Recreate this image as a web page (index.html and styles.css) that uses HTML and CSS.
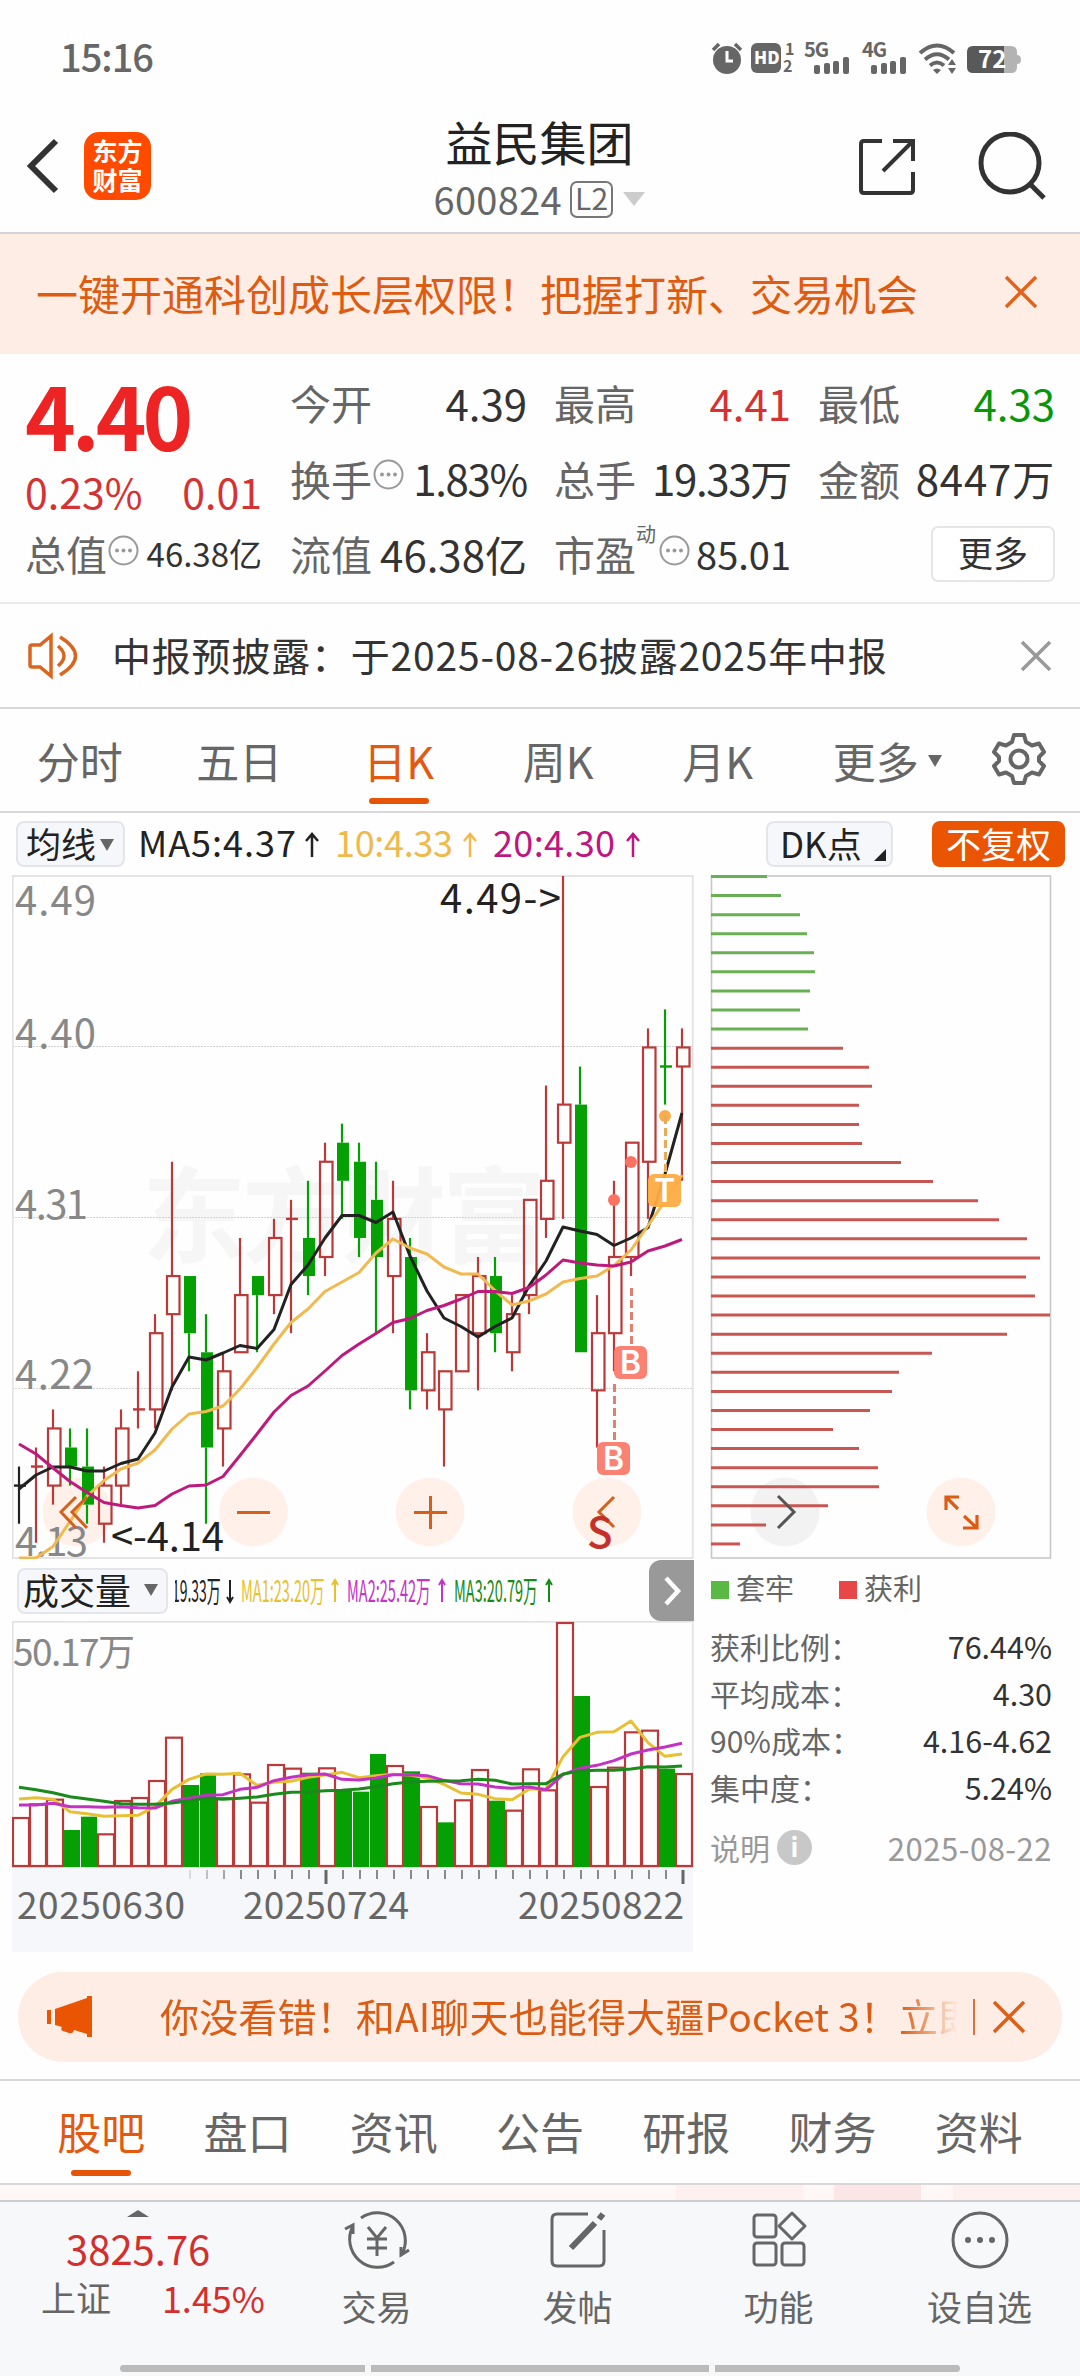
FILE: index.html
```html
<!DOCTYPE html>
<html lang="zh-CN">
<head>
    <meta charset="UTF-8">
    <meta name="viewport" content="width=device-width, initial-scale=1.0">
    <title>益民集团 600824</title>
    <link rel="stylesheet" href="styles.css">
</head>
<body>
    <div class="status-bar">
        <span class="time">15:16</span>
        <svg class="status-icons" width="312" height="38" viewBox="0 -4 312 38">
            <g fill="#666">
                <circle cx="16" cy="19" r="14"/>
                <path d="M2 9L8 3M30 9L24 3" stroke="#666" stroke-width="3.5"/>
                <rect x="40" y="2" width="30" height="30" rx="6"/>
                <text x="74" y="14" class="st-tiny">1</text>
                <text x="72" y="31" class="st-tiny">2</text>
                <text x="93" y="16" class="st-net">5G</text>
                <text x="151" y="16" class="st-net">4G</text>
                <rect x="103" y="24" width="6" height="9" rx="2"/>
                <rect x="113" y="22" width="6" height="11" rx="2"/>
                <rect x="122" y="20" width="6" height="13" rx="2"/>
                <rect x="132" y="16" width="6" height="17" rx="2"/>
                <rect x="160" y="24" width="6" height="9" rx="2"/>
                <rect x="170" y="22" width="6" height="11" rx="2"/>
                <rect x="179" y="20" width="6" height="13" rx="2"/>
                <rect x="189" y="16" width="6" height="17" rx="2"/>
                <path d="M222 29Q226 26 230 29L226 33Z"/>
                <path d="M237 24L241 18L245 24ZM237 27L241 33L245 27Z"/>
            </g>
            <path d="M16 10V20H22" fill="none" stroke="#fff" stroke-width="3"/>
            <text x="43" y="23" class="st-hd">HD</text>
            <g fill="none" stroke="#666" stroke-width="4">
                <path d="M209 12Q226 -3 243 12"/>
                <path d="M214 18.500Q226 8 238 18.500"/>
                <path d="M219 24.500Q226 18.500 233 24.500"/>
            </g>
            <path d="M262 5H294V32H262Q256 32 256 26V11Q256 5 262 5Z" fill="#595959"/>
            <path d="M293 5H300Q306 5 306 11V14Q310 14 310 19Q310 23 306 23V26Q306 32 300 32H293Z" fill="#b3b3b3"/>
            <text x="267" y="27" class="st-bat">72</text>
        </svg>
    </div>

    <header class="top">
        <svg class="back" width="34" height="58" viewBox="0 0 34 58"><path d="M30 4L5 29L30 54" fill="none" stroke="#333" stroke-width="6"/></svg>
        <div class="logo">东方<br>财富</div>
        <div class="stock">
            <h1>益民集团</h1>
            <div class="code">600824<span class="level">L2</span><i class="tri"></i></div>
        </div>
        <svg class="share" width="60" height="60" viewBox="0 0 60 60"><g fill="none" stroke="#333" stroke-width="4"><path d="M25 4H7Q4 4 4 7V53Q4 56 7 56H53Q56 56 56 53V35"/><path d="M36 4H56V24M56 4L26 34"/></g></svg>
        <svg class="search" width="72" height="72" viewBox="0 0 72 72"><g fill="none" stroke="#333" stroke-width="5"><circle cx="32" cy="31" r="29"/><path d="M52 52L66 66"/></g></svg>
    </header>

    <div class="promo">
        <span>一键开通科创成长层权限！把握打新、交易机会</span>
        <svg width="36" height="36" viewBox="0 0 36 36"><path d="M3 3L33 33M33 3L3 33" stroke="#e2631c" stroke-width="3.5"/></svg>
    </div>

    <section class="quote">
        <div class="price">
            <strong>4.40</strong>
            <div class="change"><span>0.23%</span><span>0.01</span></div>
            <div class="cell small"><label>总值</label><svg class="dots" width="31" height="31"><use href="#dots"/></svg><b>46.38亿</b></div>
        </div>
        <div class="grid">
            <div class="cell"><label>今开</label><b>4.39</b></div>
            <div class="cell"><label>最高</label><b class="up">4.41</b></div>
            <div class="cell"><label>最低</label><b class="down">4.33</b></div>
            <div class="cell"><label>换手</label><svg class="dots" width="31" height="31"><use href="#dots"/></svg><b class="tight">1.83%</b></div>
            <div class="cell"><label>总手</label><b class="tight">19.33万</b></div>
            <div class="cell"><label>金额</label><b class="loose">8447万</b></div>
            <div class="cell"><label>流值</label><b>46.38亿</b></div>
            <div class="cell pe"><label>市盈</label><sup>动</sup><svg class="dots" width="31" height="31"><use href="#dots"/></svg><b>85.01</b></div>
            <div class="cell"><button class="more">更多</button></div>
        </div>
    </section>

    <div class="notice">
        <svg class="speaker" width="54" height="48" viewBox="0 0 54 48"><g fill="none" stroke="#d9651f" stroke-width="3.500"><path d="M3 15Q3 13 5 13H13L24 4V44L13 35H5Q3 35 3 33Z"/><path d="M31 14Q43 24 31 34M33 5Q64 24 33 43"/></g></svg>
        <span>中报预披露：于2025-08-26披露2025年中报</span>
        <svg class="close" width="34" height="34" viewBox="0 0 34 34"><path d="M3 3L31 31M31 3L3 31" stroke="#999" stroke-width="3.500"/></svg>
    </div>

    <nav class="periods">
        <a>分时</a>
        <a>五日</a>
        <a class="active">日K</a>
        <a>周K</a>
        <a>月K</a>
        <a>更多<i class="tri"></i></a>
        <svg width="56" height="56" viewBox="0 0 56 56"><g fill="none" stroke="#666" stroke-width="4" stroke-linejoin="round"><path d="M23 4H33L35 11L41 14.500L48 12.500L53 21L48 26V30L53 35L48 43.500L41 41.500L35 45L33 52H23L21 45L15 41.500L8 43.500L3 35L8 30V26L3 21L8 12.500L15 14.500L21 11Z"/><circle cx="28" cy="28" r="8.500"/></g></svg>
    </nav>

    <div class="indicators">
        <span class="chip avg">均线<i class="tri"></i></span>
        <svg class="ma-text" width="510" height="46" viewBox="0 -2 510 46">
            <text x="-1" y="34" textLength="158" fill="#222">MA5:4.37</text>
            <text x="196" y="34" textLength="118" fill="#f0b94c">10:4.33</text>
            <text x="354" y="34" textLength="122" fill="#bf1580">20:4.30</text>
            <g fill="none" stroke-width="2.500">
                <path d="M173 34V11M167 18L173 11L179 18" stroke="#222"/>
                <path d="M331 34V11M325 18L331 11L337 18" stroke="#f0b94c"/>
                <path d="M494 34V11M488 18L494 11L500 18" stroke="#bf1580"/>
            </g>
        </svg>
        <span class="chip dk">DK点<i class="corner"></i></span>
        <span class="chip adjust">不复权</span>
    </div>

    <main class="charts">
        <div class="left">
            <svg id="kline" width="682" height="684"></svg>
            <div class="vol-head">
                <span class="chip">成交量<i class="tri"></i></span>
                <svg width="400" height="44" viewBox="0 0 400 44">
                    <text transform="translate(-3 32) scale(.465 1)" fill="#222">19.33万</text>
                    <text transform="translate(66 32) scale(.485 1)" fill="#e6c132">MA1:23.20万</text>
                    <text transform="translate(172 32) scale(.485 1)" fill="#c235c8">MA2:25.42万</text>
                    <text transform="translate(279 32) scale(.485 1)" fill="#168c16">MA3:20.79万</text>
                    <g fill="none" stroke-width="2">
                        <path d="M55 10V32M52 27L55 32L58 27" stroke="#222"/>
                        <path d="M160 32V10M157 15L160 10L163 15" stroke="#e6c132"/>
                        <path d="M267 32V10M264 15L267 10L270 15" stroke="#c235c8"/>
                        <path d="M374 32V10M371 15L374 10L377 15" stroke="#168c16"/>
                    </g>
                </svg>
                <span class="next"><svg width="20" height="34" viewBox="0 0 20 34"><path d="M4 4L16 17L4 30" fill="none" stroke="#fff" stroke-width="4.500"/></svg></span>
            </div>
            <svg id="volume" width="682" height="331"></svg>
        </div>
        <div class="right">
            <svg id="chips" width="342" height="684"></svg>
            <div class="legend"><i class="trapped"></i>套牢<i class="profit"></i>获利</div>
            <dl class="stats">
                <div><dt>获利比例：</dt><dd>76.44%</dd></div>
                <div><dt>平均成本：</dt><dd>4.30</dd></div>
                <div><dt>90%成本：</dt><dd>4.16-4.62</dd></div>
                <div><dt>集中度：</dt><dd>5.24%</dd></div>
            </dl>
            <div class="explain"><span>说明</span><i class="info">i</i><span class="date">2025-08-22</span></div>
        </div>
    </main>

    <div class="banner">
        <svg width="46" height="42" viewBox="0 0 46 42"><path d="M0 14H4V28H0ZM8 13L40 2V0H45V41H40V38L27 34Q26 38 22 37L16 35Q13 34 15 31L8 29Z" fill="#ea5504"/></svg>
        <span class="scroll-text">你没看错！和AI聊天也能得大疆Pocket 3！立即</span>
        <i class="line"></i>
        <svg class="close" width="34" height="34" viewBox="0 0 34 34"><path d="M2 2L32 32M32 2L2 32" stroke="#dc5f1a" stroke-width="3.500"/></svg>
    </div>

    <nav class="sections">
        <a class="active">股吧</a>
        <a>盘口</a>
        <a>资讯</a>
        <a>公告</a>
        <a>研报</a>
        <a>财务</a>
        <a>资料</a>
    </nav>
    <div class="strip"><i></i><i></i><i></i></div>

    <footer class="bottom">
        <div class="index">
            <i class="tri-up"></i>
            <div class="point">3825.76</div>
            <div class="rate"><span>上证</span><em>1.45%</em></div>
        </div>
        <div class="tool">
            <svg width="66" height="60" viewBox="0 0 66 60"><g fill="none" stroke="#666" stroke-width="3"><path d="M17 8A28 28 0 0 1 58 44M50 52A28 28 0 0 1 9 16"/><path d="M1 19L9 15V24M65 40L57 45V37"/><path d="M24 17L33 28L42 17M33 28V46M23 29H43M23 38H43"/></g></svg>
            <span>交易</span>
        </div>
        <div class="tool">
            <svg width="60" height="60" viewBox="0 0 60 60"><g fill="none" stroke="#666" stroke-width="3"><path d="M40 4H9Q4 4 4 9V51Q4 56 9 56H51Q56 56 56 51V20"/><path d="M23 38L47 13M51 9L55 4" stroke-width="6"/></g></svg>
            <span>发帖</span>
        </div>
        <div class="tool">
            <svg width="60" height="60" viewBox="0 0 60 60"><g fill="none" stroke="#666" stroke-width="3" stroke-linejoin="round"><rect x="5" y="5" width="22" height="22" rx="3"/><rect x="5" y="33" width="22" height="22" rx="3"/><rect x="33" y="33" width="22" height="22" rx="3"/><path d="M43 3L56 16L43 29L30 16Z"/></g></svg>
            <span>功能</span>
        </div>
        <div class="tool">
            <svg width="60" height="60" viewBox="0 0 60 60"><circle cx="30" cy="30" r="27" fill="none" stroke="#666" stroke-width="3"/><g fill="#666"><circle cx="18" cy="30" r="3"/><circle cx="30" cy="30" r="3"/><circle cx="42" cy="30" r="3"/></g></svg>
            <span>设自选</span>
        </div>
        <div class="home"><i></i><i></i><i></i></div>
    </footer>

    <svg width="0" height="0">
        <symbol id="dots" viewBox="0 0 31 31">
            <circle cx="15.500" cy="15.500" r="14" fill="none" stroke="#999" stroke-width="2"/>
            <g fill="#999"><circle cx="9" cy="15.500" r="2"/><circle cx="15.500" cy="15.500" r="2"/><circle cx="22" cy="15.500" r="2"/></g>
        </symbol>
    </svg>
    <script src="charts.js"></script>
</body>
</html>
```
FILE: styles.css
```css
* {
    box-sizing: border-box;
}
body {
    margin: 0;
    width: 1080px;
    height: 2376px;
    overflow: hidden;
    background: #fefefe;
    color: #333;
    font-family: "Noto Sans CJK SC", sans-serif;
    line-height: 1;
}
svg {
    display: block;
    flex: none;
}
i, em {
    font-style: normal;
}
.tri {
    display: inline-block;
    border: 7px solid transparent;
    border-top: 12px solid #666;
    border-bottom: 0;
}

/* status bar */
.status-bar {
    display: flex;
    justify-content: space-between;
    height: 117px;
    padding: 41px 57px 0 60px;
}
.status-icons {
    margin-top: -4px;
}
.time {
    font-size: 38px;
    font-weight: 500;
    letter-spacing: -1px;
    color: #666;
    line-height: 30px;
}
.st-tiny {
    font-size: 16px;
    font-weight: bold;
}
.st-net {
    font-size: 20px;
    font-weight: bold;
    letter-spacing: -1px;
}
.st-hd {
    font-size: 17px;
    font-weight: 900;
    fill: #fff;
}
.st-bat {
    font-size: 24px;
    font-weight: bold;
    fill: #fff;
}

/* header */
.top {
    display: flex;
    height: 117px;
    border-bottom: 2px solid #d4d4d8;
}
.back {
    margin: 20px 24px 0 26px;
}
.logo {
    width: 67px;
    height: 68px;
    margin-top: 15px;
    padding-top: 4px;
    border-radius: 15px;
    background: #ff4a00;
    color: #fff;
    font-size: 25px;
    font-weight: bold;
    line-height: 29px;
    text-align: center;
}
.stock {
    width: 706px;
    padding: 0 0 0 71px;
    text-align: center;
}
h1 {
    margin: 0;
    font-size: 47px;
    font-weight: 400;
    line-height: 47px;
    color: #222;
}
.code {
    display: flex;
    justify-content: center;
    align-items: center;
    height: 38px;
    margin-top: 16px;
    font-size: 38px;
    letter-spacing: 0.300px;
    color: #666;
    line-height: 34px;
}
.level {
    height: 37px;
    margin: 0 10px 0 8px;
    padding: 0 3px;
    border: 2px solid #777;
    border-radius: 7px;
    font-size: 30px;
    line-height: 29px;
}
.code .tri {
    border-width: 14px 11px 0;
    border-top-color: #ccc;
}
.share {
    margin-top: 20px;
}
.search {
    margin: 15px 0 0 61px;
}

.promo {
    display: flex;
    align-items: center;
    height: 120px;
    padding: 0 41px 2px 36px;
    justify-content: space-between;
    background: #fdede4;
    color: #de5c12;
    font-size: 42px;
}
.promo svg {
    margin-bottom: 2px;
}

/* quote */
.quote {
    display: flex;
    gap: 28px;
    height: 250px;
    padding: 11px 25px 0 25px;
    border-bottom: 2px solid #ebebeb;
}
.price {
    width: 237px;
}
.price strong {
    display: block;
    height: 104px;
    font-size: 86px;
    font-weight: bold;
    letter-spacing: -4px;
    line-height: 97px;
    color: #ee2424;
}
.change {
    display: flex;
    justify-content: space-between;
    height: 47px;
    font-size: 41px;
    line-height: 44px;
    color: #d53333;
}
.grid {
    display: grid;
    grid-template-columns: repeat(3, 237px);
    grid-auto-rows: 75.500px;
    column-gap: 27px;
}
.cell {
    display: flex;
    align-items: center;
    height: 75px;
    white-space: nowrap;
}
.cell label {
    font-size: 41px;
    color: #666;
}
.cell b {
    margin-left: auto;
    font-size: 42px;
    font-weight: 400;
    color: #333;
}
.cell .up {
    color: #d53333;
}
.cell .down {
    color: #0a960a;
}
.cell .tight {
    letter-spacing: -1.300px;
}
.cell .loose {
    letter-spacing: 0.800px;
}
.small b {
    font-size: 33px;
}
.dots {
    margin: -7px 0 0 1px;
}
.pe b {
    font-size: 38px;
}
.pe sup {
    width: 22px;
    font-size: 20px;
    color: #666;
    margin: 0 0 40px 0;
}
.more {
    width: 124px;
    height: 56px;
    margin-left: auto;
    padding: 0 0 4px;
    border: 2px solid #e6e6e6;
    border-radius: 7px;
    background: #fff;
    color: #333;
    font: 35px "Noto Sans CJK SC", sans-serif;
    line-height: 40px;
}

.notice {
    display: flex;
    align-items: center;
    height: 105px;
    padding: 0 27px;
    border-bottom: 2px solid #d8d8da;
    font-size: 39px;
    letter-spacing: 0.800px;
}
.notice span {
    padding: 0 0 3px 31px;
}
.notice .close {
    margin-left: auto;
}

/* period tabs */
.periods {
    display: flex;
    align-items: center;
    height: 104px;
    border-bottom: 2px solid #d8d8da;
}
.periods a {
    display: flex;
    justify-content: center;
    position: relative;
    width: 159.500px;
    height: 100%;
    color: #666;
    font-size: 43px;
    line-height: 102px;
}
.periods svg {
    margin: 0 0 2px 34px;
}
.periods .tri {
    margin: 46px -20px 0 9px;
    height: 12px;
}
.periods .active, .sections .active {
    color: #e2590f;
}
.active::after {
    content: "";
    position: absolute;
    left: 50%;
    bottom: 7px;
    width: 60px;
    height: 6px;
    margin-left: -30px;
    border-radius: 3px;
    background: #e65408;
}

/* indicator row */
.indicators {
    display: flex;
    height: 62px;
    padding: 8px 15px 0 16px;
}
.chip {
    display: flex;
    height: 46px;
    border: 2px solid #e3e5ea;
    border-radius: 8px;
    background: #f6f7fa;
    color: #222;
    font-size: 35px;
    line-height: 39px;
    white-space: nowrap;
}
.avg {
    width: 109px;
    padding-left: 8px;
}
.avg .tri {
    margin: 16px 0 0 4px;
}
.ma-text {
    margin-left: 14px;
    font-size: 36px;
}
.dk {
    width: 127px;
    margin-left: 117px;
    padding-left: 12px;
}
.corner {
    align-self: flex-end;
    margin: 0 0 4px 12px;
    border: 6px solid #222;
    border-top-color: transparent;
    border-left-color: transparent;
}
.adjust {
    width: 133px;
    margin-left: 39px;
    padding-left: 12px;
    border-color: #ea5504;
    background: #ea5504;
    color: #fff;
}

/* charts */
.charts {
    display: flex;
    height: 1076px;
    padding-left: 12px;
}
.left {
    width: 682px;
}
.right {
    width: 342px;
    margin-left: 16px;
}
.vol-head {
    display: flex;
    height: 62px;
}
.vol-head .chip {
    width: 151px;
    margin: 9px 7px 0 5px;
    padding-left: 4px;
    font-size: 36px;
}
.vol-head .tri {
    margin: 14px 0 0 13px;
}
.vol-head > svg {
    margin-top: 11px;
    font-size: 30px;
}
.next {
    display: flex;
    align-items: center;
    justify-content: center;
    width: 45px;
    height: 61px;
    margin: 1px 0 0 auto;
    border-radius: 12px 0 0 12px;
    background: #999;
}
.axis {
    font-size: 40px;
    fill: #888;
}
.mark {
    font-size: 40px;
    fill: #222;
}
.day {
    font-size: 37px;
    fill: #666;
}
.peak {
    font-size: 37px;
    fill: #888;
}
.watermark {
    font-size: 104px;
    font-weight: bold;
    fill: #f6f6f6;
}
.badge {
    font-family: Inter, sans-serif;
    font-size: 32px;
    font-weight: 600;
    fill: #fff;
    text-anchor: middle;
}
.legend {
    display: flex;
    align-items: center;
    height: 62px;
    padding: 0 0 5px 1px;
    color: #666;
    font-size: 29px;
}
.legend i {
    width: 18px;
    height: 18px;
    margin: 4px 7px 0 0;
}
.trapped {
    background: #5ab844;
}
.legend .profit {
    margin-left: 45px;
    background: #e84747;
}
.stats {
    margin: 0;
    padding-top: 2px;
}
.stats div {
    display: flex;
    justify-content: space-between;
    height: 47px;
    font-size: 30px;
    line-height: 46px;
    color: #666;
}
.stats dd {
    margin: 0;
    font-size: 30.500px;
    color: #333;
}
.explain {
    display: flex;
    align-items: center;
    height: 60px;
    margin-top: 6px;
    font-size: 30px;
    color: #999;
}
.info {
    width: 35px;
    height: 35px;
    margin-left: 7px;
    border-radius: 50%;
    background: #c8c8c8;
    color: #fff;
    font-weight: bold;
    font-size: 26px;
    line-height: 31px;
    text-align: center;
}
.date {
    margin-left: auto;
    font-size: 31px;
    letter-spacing: 0.500px;
}

.banner {
    display: flex;
    align-items: center;
    width: 1044px;
    height: 90px;
    margin: 21px 18px 17px;
    padding: 0 36px 0 29px;
    border-radius: 45px;
    background: #fdede4;
    color: #dc5c14;
    font-size: 39px;
}
.scroll-text {
    width: 798px;
    height: 50px;
    margin-left: 67px;
    letter-spacing: 0.150px;
    line-height: 46px;
    overflow: hidden;
    white-space: nowrap;
    -webkit-mask-image: linear-gradient(to right, #000 740px, transparent 798px);
    mask-image: linear-gradient(to right, #000 740px, transparent 798px);
}
.line {
    width: 2px;
    height: 36px;
    margin: 0 17px;
    background: #d9743c;
}

.sections {
    display: flex;
    height: 106px;
    padding: 0 28px;
    border-top: 2px solid #d8d8da;
    border-bottom: 2px solid #d8d8da;
}
.sections a {
    position: relative;
    flex: 1;
    color: #666;
    font-size: 44px;
    line-height: 101px;
    text-align: center;
}
.strip {
    display: flex;
    height: 15px;
    padding-left: 676px;
    background: #fff7f6;
}
.strip i {
    width: 131px;
    background: #fdf0ef;
}
.strip i:nth-child(2) {
    width: 89px;
    margin: 0 32px 0 31px;
    background: #fbe6e5;
}

/* bottom bar */
.bottom {
    display: flex;
    flex-wrap: wrap;
    align-content: flex-start;
    height: 177px;
    border-top: 2px solid #ccced2;
    background: #f7f8fa;
}
.index {
    width: 276px;
    height: 156px;
}
.tri-up {
    display: block;
    width: 0;
    margin: 8px 0 0 127px;
    border: 11px solid transparent;
    border-top: 0;
    border-bottom: 7px solid #666;
}
.point {
    margin-top: 8px;
    padding-left: 66px;
    font-size: 40px;
    line-height: 46px;
    color: #d42f2f;
}
.rate {
    display: flex;
    justify-content: space-between;
    padding: 0 11px 0 41px;
    font-size: 35px;
    line-height: 52px;
    color: #666;
}
.rate em {
    font-size: 36px;
    color: #d42f2f;
}
.tool {
    display: flex;
    flex-direction: column;
    align-items: center;
    width: 201px;
    height: 156px;
    padding-top: 8px;
    color: #666;
    font-size: 35px;
}
.tool span {
    margin-top: 18px;
}
.home {
    display: flex;
    gap: 6px;
    height: 7px;
    margin: 7px 0 0 120px;
}
.home i {
    width: 245px;
    background: #bbb;
    border-radius: 4px 0 0 4px;
}
.home i:nth-child(2) {
    width: 338px;
    border-radius: 0;
}
.home i:nth-child(3) {
    border-radius: 0 4px 4px 0;
}
```
FILE: charts.js
```js
const STEP = 17;
const RED = '#b93a38';
const GREEN = '#04a004';

// [open/close top, open/close bottom, high, low, color], price in cents above 4.00
const candles = [
    [17, 17, 18, 15, 'k'], [18, 18, 19, 14, 'r'], [20, 17, 21, 16, 'r'], [19, 18, 20, 17, 'g'], [18, 16, 20, 15, 'g'],
    [17, 15, 18, 14, 'r'], [20, 17, 21, 16, 'r'], [21, 21, 23, 20, 'r'], [25, 21, 26, 20, 'r'], [28, 26, 34, 22, 'r'],
    [28, 25, 28, 23, 'g'], [24, 19, 26, 15, 'g'], [23, 20, 24, 18, 'r'], [27, 24, 30, 24, 'r'], [28, 27, 28, 24, 'g'],
    [30, 27, 31, 26, 'r'], [31, 31, 32, 25, 'r'], [30, 28, 33, 27, 'g'], [34, 29, 35, 28, 'r'], [35, 33, 36, 31, 'g'],
    [34, 30, 35, 29, 'g'], [32, 29, 34, 25, 'g'], [31, 28, 33, 25, 'r'], [29, 22, 30, 21, 'g'], [24, 22, 25, 21, 'r'],
    [23, 21, 23, 18, 'r'], [27, 23, 27, 23, 'r'], [28, 25, 29, 22, 'r'], [28, 25, 29, 24, 'g'], [26, 24, 27, 23, 'r'],
    [32, 27, 32, 26, 'r'], [33, 31, 38, 30, 'r'], [37, 35, 49, 31, 'r'], [37, 24, 39, 24, 'g'], [25, 22, 27, 19, 'r'],
    [29, 25, 33, 23, 'r'], [35, 29, 35, 28, 'r'], [40, 34, 41, 31, 'r'], [39, 39, 42, 37, 'g'], [40, 39, 41, 33, 'r']
];
const ma5 = [614, 600, 592, 592, 596, 596, 588.5, 584, 558, 512, 482, 485, 478, 470.5, 473.5, 454.5, 409.5, 390, 363, 340.5, 340.5, 347.5, 337, 381, 416, 443, 451.5, 462, 451.5, 443, 411, 386, 352, 356, 359.5, 370.5, 363, 352.5, 299, 238];
const ma10 = [683, 683, 671.5, 646.5, 621, 605.5, 594, 588, 575, 554, 539, 536.5, 531, 514, 492.5, 469, 447.5, 434, 416.5, 407, 397.5, 378, 364, 373, 379, 392, 399, 399, 415.5, 430, 426, 419, 407, 403.5, 401, 390.5, 375, 350.5, 326, 300];
const ma20 = [569, 579, 593, 606.5, 617.5, 627.5, 630.5, 633, 630.5, 619, 611, 610, 601.5, 580.5, 559, 537, 520.5, 511, 496, 480.5, 469, 458.5, 447.5, 443.5, 435.5, 430.5, 424, 416.5, 416.5, 418.5, 412.5, 400, 385, 388, 390, 391, 387, 376, 371, 364.5];

const volumes = [801, 760, 746, 840, 800, 850, 750, 741, 690, 560, 705, 670, 742, 670, 755, 642, 653, 668, 652, 720, 725, 612, 645, 664, 768, 817, 748, 657, 752, 779, 655, 718, 216, 438, 708, 650, 544, 539, 656, 669];
const greenVolumes = [3, 4, 10, 11, 17, 19, 20, 21, 23, 25, 28, 33, 38];
const vol1 = [747, 743, 748, 785, 791, 799, 797, 796, 770, 718, 688, 672, 673, 670, 706, 697, 694, 682, 675, 667, 683, 677, 673, 675, 684, 703, 729, 733, 746, 749, 718, 716, 620, 562, 547, 545, 513, 578, 619, 612];
const vol2 = [765, 765, 760, 770, 770, 772, 770, 773, 774, 754, 745, 736, 734, 718, 712, 692, 682, 674, 672, 688, 690, 684, 674, 674, 677, 691, 701, 702, 711, 715, 711, 719, 674, 655, 646, 632, 612, 600, 591, 580];
const vol3 = [712, 719, 728, 740, 747, 754, 761, 763, 763, 759, 752, 745, 748, 745, 741, 733, 727, 726, 722, 721, 717, 710, 701, 696, 694, 693, 692, 688, 691, 702, 701, 701, 672, 663, 661, 661, 657, 650, 651, 648];

const chipWidths = [56, 70, 89, 96, 103, 104, 99, 89, 97, 132, 158, 161, 148, 148, 151, 190, 222, 267, 288, 316, 329, 315, 324, 339, 296, 221, 188, 181, 159, 122, 148, 167, 168, 117, 55, 29];

function line(x1, y1, x2, y2, color, width, extra = '') {
    return `<line x1="${x1}" y1="${y1}" x2="${x2}" y2="${y2}" stroke="${color}" stroke-width="${width}" ${extra}/>`;
}

function curve(values, color, toY = v => v) {
    const points = values.map((v, i) => `${7 + STEP * i},${toY(v)}`).join(' ');
    return `<polyline points="${points}" fill="none" stroke="${color}" stroke-width="3" stroke-linejoin="round"/>`;
}

function text(x, y, cls, length, value) {
    return `<text x="${x}" y="${y}" class="${cls}" textLength="${length}">${value}</text>`;
}

function badge(x, y, color, letter) {
    return `<rect x="${x}" y="${y}" width="33" height="33" rx="6" fill="${color}" fill-opacity="0.95"/>
        <text x="${x + 16.5}" y="${y + 28}" class="badge">${letter}</text>`;
}

function drawKline() {
    const y = cents => 1 + (49 - cents) * 19.05;
    let s = '<text x="130" y="380" class="watermark" textLength="404">东方财富</text>';
    [171.5, 342.5, 513.5].forEach(g => s += line(0, g, 681, g, '#d2d2d2', 1, 'stroke-dasharray="2 1"'));
    s += '<rect x="0.75" y="1" width="680" height="682" fill="none" stroke="#e2e2e2" stroke-width="1.8"/>';

    // round buttons over the chart
    [65, 241.5, 418, 595].forEach(x => s += `<circle cx="${x}" cy="637" r="34.5" fill="#fff1ea"/>`);

    candles.forEach(([top, bottom, high, low, c], i) => {
        const x = 7 + STEP * i;
        const color = c === 'g' ? GREEN : c === 'r' ? RED : '#222';
        s += line(x, y(high), x, y(top), color, 2.2);
        s += line(x, y(bottom), x, y(low), color, 2.2);
        if (top === bottom) {
            s += line(x - 5, y(top), x + 7, y(top), color, 2.4);
        } else if (c === 'g') {
            s += `<rect x="${x - 5}" y="${y(top)}" width="12" height="${y(bottom) - y(top)}" fill="${color}"/>`;
        } else {
            s += `<rect x="${x - 5}" y="${y(top)}" width="12.5" height="${y(bottom) - y(top)}" fill="none" stroke="${color}" stroke-width="2.2"/>`;
        }
    });
    s += text(3, 40, 'axis', 81, '4.49') + text(3, 173, 'axis', 81, '4.40') + text(3, 344, 'axis', 73, '4.31');
    s += text(3, 514, 'axis', 79, '4.22') + text(3, 681, 'axis', 73, '4.13');
    s += curve(ma5, '#222') + curve(ma10, '#f0ba50') + curve(ma20, '#bd1a7e');
    s += text(428, 38, 'mark', 121, '4.49-&gt;') + text(99, 676, 'mark', 113, '&lt;-4.14');

    // trade marks
    s += '<circle cx="602" cy="325" r="6" fill="#fb7162"/><circle cx="619" cy="287" r="6" fill="#fb7162"/>';
    s += line(619.5, 413, 619.5, 470, '#df8172', 3, 'stroke-dasharray="8 4"');
    s += line(602.5, 509, 602.5, 566, '#df8172', 3, 'stroke-dasharray="8 4"');
    s += badge(602, 471, '#fb7b6b', 'B') + badge(585, 567, '#fb7b6b', 'B');
    s += '<circle cx="653" cy="241" r="6" fill="#fcad4b"/>';
    s += line(653.5, 241, 653.5, 298, '#e8ab58', 3, 'stroke-dasharray="8 4"');
    s += badge(636, 299, '#fdac45', 'T');

    s += '<g fill="none" stroke="#d3601d" stroke-width="3"><path d="M64 622L49 637L64 653M75 622L60 637L75 653"/>';
    s += '<path d="M225 637.5H258M402 637.5H435M418.5 621V654M602 622L587 637L602 652"/></g>';
    s += '<text x="575" y="673" font-size="42" font-weight="500" fill="#c5302b">S</text>';
    document.getElementById('kline').innerHTML = s;
}

function drawVolume() {
    const y = v => (v - 213) / 3;
    let s = '<rect x="0.75" y="0.75" width="680" height="246" fill="none" stroke="#e2e2e2" stroke-width="1.8"/>';
    s += '<rect x="0" y="247" width="681" height="84" fill="#f6f7fa"/>';
    s += text(1, 45, 'peak', 122, '50.17万');
    volumes.forEach((v, i) => {
        const x = 1 + STEP * i;
        if (greenVolumes.includes(i)) {
            s += `<rect x="${x}" y="${y(v)}" width="16" height="${246 - y(v)}" fill="${GREEN}"/>`;
        } else {
            s += `<rect x="${x}" y="${y(v) + 1}" width="16" height="${244 - y(v)}" fill="#fefefe" stroke="${RED}" stroke-width="2.2"/>`;
        }
    });
    s += curve(vol1, '#e8c033', y) + curve(vol2, '#c233c4', y) + curve(vol3, '#1a8a1a', y);
    for (let i = 10; i < 40; i++) {
        const major = i === 18 || i === 39;
        s += line(8 + STEP * i, 249, 8 + STEP * i, major ? 263 : 258, '#666', major ? 3 : 1.5, `opacity="${Math.min(1, (i - 9) / 4)}"`);
    }
    s += text(5, 298, 'day', 168, '20250630') + text(231, 298, 'day', 166, '20250724') + text(506, 298, 'day', 166, '20250822');
    document.getElementById('volume').innerHTML = s;
}

function drawChips() {
    let s = '<rect x="1.5" y="1" width="339" height="682" fill="none" stroke="#c8c8c8" stroke-width="1.6"/>';
    s += '<circle cx="75" cy="637" r="34.5" fill="#f2f2f2"/><circle cx="251" cy="637" r="34.5" fill="#fff1ea"/>';
    chipWidths.forEach((w, i) => s += line(1, 1.5 + i * 19.07, 1 + w, 1.5 + i * 19.07, i < 9 ? '#69b055' : '#c85653', 3));
    s += '<path d="M68 621L84 637L68 653" fill="none" stroke="#555" stroke-width="3"/>';
    s += '<path d="M236 635V622H249M236 622L248 634M267 640V653H253M267 653L254 641" fill="none" stroke="#dd5c14" stroke-width="3.2"/>';
    document.getElementById('chips').innerHTML = s;
}

drawKline();
drawVolume();
drawChips();
```
